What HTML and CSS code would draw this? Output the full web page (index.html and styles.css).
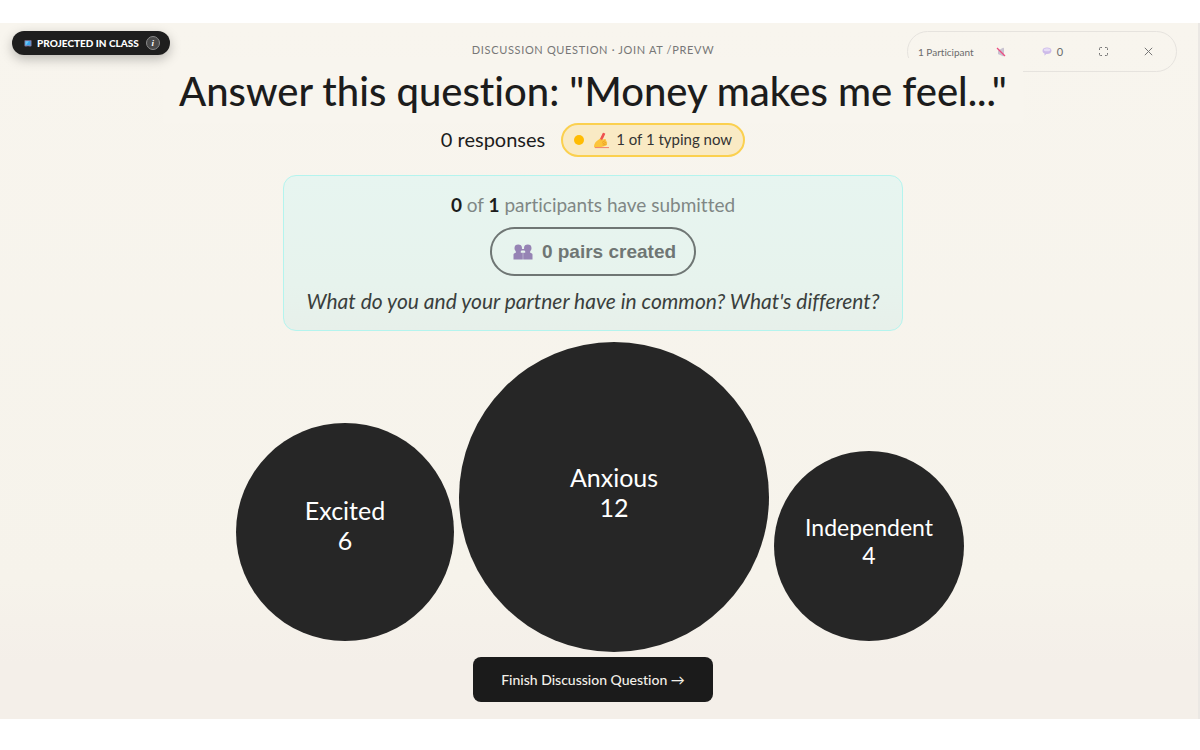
FILE: index.html
```html
<!DOCTYPE html>
<html lang="en">
<head>
    <meta charset="UTF-8">
    <meta name="viewport" content="width=device-width, initial-scale=1.0">
    <title>Discussion question</title>
    <link rel="stylesheet" href="styles.css">
</head>
<body>
    <main class="stage">
        <div class="projected">
            <svg class="projected-icon" viewBox="0 0 16 14" aria-hidden="true">
                <rect x="1" y="0.5" width="14" height="12" rx="1" fill="#8a7fa8"/>
                <rect x="3" y="2.5" width="10" height="8" fill="#35a6ee"/>
                <path d="M3 2.5h7L4 10.500H3z" fill="#6cc8fa"/>
                <path d="M3 12.500h2V14H3zM11 12.500h2V14h-2z" fill="#6d6386"/>
            </svg>
            <span>PROJECTED IN CLASS</span>
            <button class="info" type="button" aria-label="Info">i</button>
        </div>

        <div class="toolbar">
            <span class="people">1 Participant</span>
            <button type="button" aria-label="Muted">
                <svg width="10" height="10" viewBox="0 0 10 10">
                    <path d="M2 4q0-1 1-1l4-2.200q1-.3 1 .7v7q0 1-1 .7L3 7.500Q2 7.500 2 6.500z" fill="#c9c2d0"/>
                    <path d="M1 1l8 8" stroke="#ec4d80" stroke-width="1.200"/>
                </svg>
            </button>
            <button type="button" class="chat" aria-label="Chat, 0 messages">
                <svg width="10" height="9" viewBox="0 0 10 9">
                    <path d="M5 .5C7.700.500 9.500 1.700 9.500 3.700S7.700 7 5 7l-.8 0L2.500 8.700V6.500C1.300 6 .5 5 .5 3.700.5 1.700 2.300.500 5 .500z" fill="#cdbbe9"/>
                    <ellipse cx="5" cy="2.800" rx="3.300" ry="1.500" fill="#e6dcf5"/>
                </svg>
                <span>0</span>
            </button>
            <button type="button" aria-label="Full screen">
                <svg width="9" height="9" viewBox="0 0 9 9" fill="none" stroke="#777">
                    <path d="M.5 3V1.500q0-1 1-1H3M6 .5h1.500q1 0 1 1V3M8.500 6v1.500q0 1-1 1H6M3 8.500H1.500q-1 0-1-1V6"/>
                </svg>
            </button>
            <button type="button" aria-label="Close">
                <svg width="9" height="9" viewBox="0 0 9 9" stroke="#777">
                    <path d="M.8.800l7.400 7.400M8.200.800L.8 8.200"/>
                </svg>
            </button>
        </div>

        <header class="question">
            <p class="eyebrow">DISCUSSION QUESTION · JOIN AT /PREVW</p>
            <h1>Answer this question: "Money makes me feel..."</h1>
            <div class="status">
                <span class="responses">0 responses</span>
                <span class="typing">
                    <i class="dot"></i>
                    <svg width="18" height="17" viewBox="0 0 18 17" aria-hidden="true">
                        <path d="M10 .8l2.300 1L8.500 10l-2.800 2 .6-3.500z" fill="#ef5350"/>
                        <path d="M5.700 12l.3-1.700 1.200.6z" fill="#6b3b2b"/>
                        <path d="M1 14.500c0-3 2-5.500 4.500-6.800l2.500-1.900c1-.5 1.800.5 1 1.300L7.500 8.600c1.500-.8 3.700-1.800 4.600-1.700 1 .1 1 1.100.2 1.600 1.200-.2 1.900.8.900 1.600 1.200 0 1.500 1.100.4 1.700.8.500.6 1.300-.4 1.600-2.700.8-5.200 1.800-7.700 2.200-2 .3-4.500.6-4.500-1.100z" fill="#fcc43b"/>
                        <path d="M9 10.500l3.300-2M9.500 12l3.700-1.900M9.700 13.300l3.900-1.500" stroke="#e59a22" stroke-width=".7" fill="none"/>
                        <path d="M7.800 7.300L11 1.200" stroke="#ef5350" stroke-width="1.600"/>
                        <path d="M2 15.600h14" stroke="#f0806c"/>
                    </svg>
                    <span>1 of 1 typing now</span>
                </span>
            </div>
        </header>

        <section class="pairs">
            <p class="submitted"><strong>0</strong> of <strong>1</strong> participants have submitted</p>
            <button class="pairs-btn" type="button">
                <svg width="20" height="16" viewBox="0 0 20 16" fill="#9683b4" aria-hidden="true">
                    <path d="M1.500 4C1.500 1.500 3 .5 5.200.500S9 1.500 9 4c0 1.500-.5 2.500-1.200 3.200v1.500H9.800V15.500H.5V10.500q0-1 1-1.200l1.300-.6V7.200C2 6.500 1.500 5.500 1.500 4z"/>
                    <path d="M11 4c0-2.500 1.500-3.500 3.800-3.500S18.500 1.500 18.500 4c0 1.500-.5 2.500-1.300 3.200v1.500l1.300.6q1 .2 1 1.200v5h-9.300V8.700h2V7.200C11.500 6.500 11 5.500 11 4z"/>
                    <path d="M8 5h4v1.500H8z"/>
                </svg>
                <span>0 pairs created</span>
            </button>
            <p class="prompt">What do you and your partner have in common? What's different?</p>
        </section>

        <section class="bubbles">
            <div class="bubble medium"><span>Excited</span><span>6</span></div>
            <div class="bubble large"><span>Anxious</span><span>12</span></div>
            <div class="bubble small"><span>Independent</span><span>4</span></div>
        </section>

        <button class="finish" type="button">Finish Discussion Question →</button>
    </main>
</body>
</html>
```
FILE: styles.css
```css
* {
    box-sizing: border-box;
}
body {
    margin: 0;
    padding: 23px 0 32px;
    background: #fff;
    color: #1c1c1c;
    font-family: Lato, "Open Sans", sans-serif;
    font-variant-ligatures: none;
}
h1, p {
    margin: 0;
}
button {
    font-family: inherit;
    font-variant-ligatures: none;
    padding: 0;
    border: none;
    background: none;
    color: inherit;
    cursor: pointer;
}
.stage {
    position: relative;
    display: flex;
    flex-direction: column;
    align-items: center;
    padding: 19px 12px 17px 0;
    border-right: 2px solid #ebe8e4;
    background: linear-gradient(#f8f5ee, #f6f3eb 80%, #f4efe9 92%, #f4efe9);
}

/* corner controls */
.projected {
    position: absolute;
    z-index: 1;
    top: 8px;
    left: 12px;
    display: flex;
    align-items: center;
    gap: 5px;
    height: 24px;
    padding: 0 10px 0 12px;
    border-radius: 12px;
    background: #1e1e1e;
    box-shadow: 0 4px 12px rgba(0, 0, 0, 0.25);
    color: #fff;
    font-size: 10px;
    font-weight: 900;
}
.projected-icon {
    width: 8px;
    height: 7px;
}
.info {
    width: 14px;
    height: 14px;
    margin-left: 2px;
    border: 1px solid #8a8a8a;
    border-radius: 50%;
    background: #4a4a4a;
    color: #fff;
    font: italic bold 9px/11px "Liberation Serif", serif;
}
.toolbar {
    position: absolute;
    top: 8px;
    right: 21px;
    display: flex;
    align-items: center;
    justify-content: space-between;
    width: 270px;
    height: 41px;
    padding: 0 23px 0 10px;
    border: 1px solid #e6e3de;
    border-radius: 21px;
    color: #6b6b6b;
    font-size: 10px;
}
.toolbar button {
    display: flex;
    align-items: center;
    gap: 5px;
}
.people {
    margin-right: -14px;
}
.chat {
    font-size: 11px;
}

.question {
    display: flex;
    flex-direction: column;
    align-items: center;
}
.eyebrow {
    color: #777;
    font-size: 11px;
    line-height: 16px;
    letter-spacing: 0.06em;
}
h1 {
    position: relative;
    padding: 1px 16px 0;
    background: #f8f5ee;
    font-size: 40px;
    font-weight: 500;
    line-height: 64px;
    text-align: center;
}
.status {
    display: flex;
    align-items: center;
    gap: 16px;
}
.responses {
    font-size: 20px;
    line-height: 24px;
    padding-bottom: 2px;
}
.typing {
    display: flex;
    align-items: center;
    gap: 5px;
    height: 34px;
    padding: 0 11px;
    border: 2px solid #fbd04f;
    border-radius: 17px;
    background: #f9eac4;
    color: #333;
    font-size: 15px;
}
.typing span {
    padding-bottom: 2px;
}
.dot {
    width: 10px;
    height: 10px;
    margin-right: 4px;
    border-radius: 50%;
    background: #ffbc03;
}

.pairs {
    display: flex;
    flex-direction: column;
    align-items: center;
    margin-top: 18px;
    padding: 17px 22px 16px;
    border: 1px solid #b4f4ee;
    border-radius: 13px;
    background: linear-gradient(#e7f5f0, #e7f3ed 70%, #e7f0ea);
}
.submitted {
    color: #808785;
    font-size: 19px;
    line-height: 24px;
}
.submitted strong {
    color: #1c1c1c;
}
.pairs-btn {
    display: flex;
    align-items: center;
    gap: 9px;
    height: 49px;
    margin: 10px 0 12px;
    padding: 0 18px 0 21px;
    border: 2px solid #6f7674;
    border-radius: 25px;
    color: #6f7674;
    font: bold 19px "Liberation Sans", Arial, sans-serif;
}
.prompt {
    color: #3a3f3d;
    font-size: 21px;
    font-style: italic;
    line-height: 26px;
}

.bubbles {
    display: flex;
    align-items: flex-end;
    gap: 5px;
    margin: 11px 0 5px 14px;
}
.bubble {
    display: flex;
    flex-direction: column;
    align-items: center;
    justify-content: center;
    margin-bottom: 11px;
    padding-bottom: 10px;
    border-radius: 50%;
    background: #262626;
    color: #fff;
    font-size: 25px;
    line-height: 30px;
}
.medium {
    width: 218px;
    height: 218px;
    padding-bottom: 14px;
}
.large {
    width: 310px;
    height: 310px;
    margin-bottom: 0;
}
.small {
    width: 190px;
    height: 190px;
    font-size: 23px;
    line-height: 28px;
}
.finish {
    height: 45px;
    padding: 0 28px;
    border-radius: 8px;
    background: #1b1b1b;
    color: #f3f0e9;
    font-size: 14px;
    font-weight: 500;
}
```
